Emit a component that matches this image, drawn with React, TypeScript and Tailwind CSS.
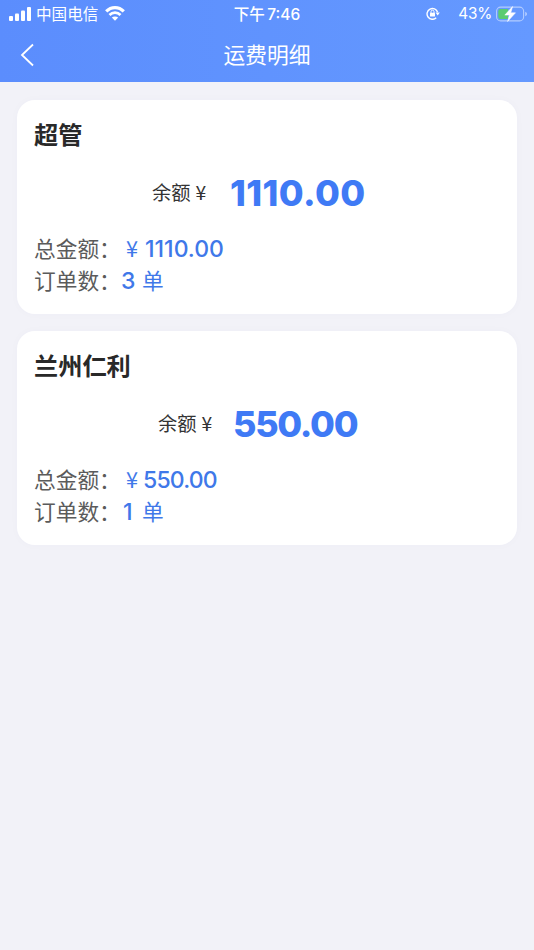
import clsx from "clsx";

type Account = {
  name: string;
  balance: string;
  total: string;
  orders: number;
  balanceClass: string;
  balanceTracking: string;
  totalTracking: string;
  orderClass: string;
};

const accounts: Account[] = [
  {
    name: "超管",
    balance: "1110.00",
    total: "1110.00",
    orders: 3,
    balanceClass: "pl-[118px]",
    balanceTracking: "tracking-[0.4px]",
    totalTracking: "ml-[2px] tracking-[0px]",
    orderClass: "w-[21px]",
  },
  {
    name: "兰州仁利",
    balance: "550.00",
    total: "550.00",
    orders: 1,
    balanceClass: "pl-[124px]",
    balanceTracking: "-ml-[3px] tracking-[-1.3px]",
    totalTracking: "tracking-[-0.8px]",
    orderClass: "w-[21px] pl-[2px]",
  },
];

function SignalIcon() {
  return (
    <svg width="22" height="14" viewBox="0 0 22 14" fill="white">
      <rect x="0" y="9" width="4" height="5" rx="1" />
      <rect x="6" y="6.5" width="4" height="7.5" rx="1" />
      <rect x="12" y="3.5" width="4" height="10.5" rx="1" />
      <rect x="18" y="0" width="4" height="14" rx="1" />
    </svg>
  );
}

function WifiIcon() {
  return (
    <svg width="20" height="15" viewBox="0 0 20 15" fill="none" stroke="white">
      <path d="M1.2 5.4C6.2.3 13.8.3 18.8 5.4" strokeWidth="3.1" />
      <path d="M4.5 8.9c3.1-3 7.9-3 11 0" strokeWidth="2.8" />
      <path d="M10 14.8 6.8 11.6c1.7-1.6 4.7-1.6 6.4 0Z" fill="white" stroke="none" />
    </svg>
  );
}

function RotationLockIcon() {
  return (
    <svg width="14" height="13" viewBox="0 0 14 13" fill="none" stroke="white">
      <path d="M10.2 10.8A5.4 5.4 0 1 1 11.6 5.3" strokeWidth="1.4" />
      <path d="M9.6 5.6h4.2l-2.1 2.9Z" fill="white" stroke="none" />
      <rect x="4" y="5.7" width="5" height="3.8" rx=".5" fill="white" stroke="none" />
      <path d="M5 6V4.7a1.5 1.5 0 0 1 3 0V6" strokeWidth="1" />
    </svg>
  );
}

function BatteryIcon() {
  return (
    <svg width="32" height="16" viewBox="0 0 32 16" fill="none">
      <rect x=".6" y="1.1" width="27" height="13.8" rx="4" stroke="white" strokeOpacity=".5" strokeWidth="1.1" />
      <path d="M4.5 3H12v10H4.5A2.2 2.2 0 0 1 2.3 10.8V5.2A2.2 2.2 0 0 1 4.5 3Z" fill="#5bcb72" />
      <path d="M29.2 5.7v4.6c1.2-.5 1.8-1.3 1.8-2.3s-.6-1.8-1.8-2.3Z" fill="white" fillOpacity=".5" />
      <path d="M16.6.5 8.8 9.1h4.6l-1.8 6.4 7.9-8.7h-4.7Z" fill="white" stroke="white" strokeWidth=".5" />
    </svg>
  );
}

function StatusBar() {
  return (
    <div className="grid h-7 grid-cols-3 items-center pr-[6px] pl-[9px] text-white">
      <div className="flex items-center pb-px">
        <SignalIcon />
        <span className="mr-[7px] ml-[5px] text-[15.6px] leading-none">中国电信</span>
        <WifiIcon />
      </div>
      <div className="pr-[3px] text-center text-[15.5px] leading-none font-medium whitespace-nowrap">
        下午 <span className="-ml-px font-['Inter']">7:46</span>
      </div>
      <div className="flex items-center justify-end pb-px">
        <RotationLockIcon />
        <span className="mr-1 ml-[18px] font-['Inter'] text-[15.3px] leading-none tracking-[-0.2px]">43%</span>
        <BatteryIcon />
      </div>
    </div>
  );
}

function AccountCard({ account }: { account: Account }) {
  return (
    <section className="h-[214px] rounded-[18px] bg-white px-[17px] pt-4 shadow-[0_0_10px_rgba(70,70,120,0.025)]">
      <h2 className="h-9 text-[24.2px] leading-9 font-bold text-[#292929]">{account.name}</h2>
      <div className={clsx("mt-4 flex h-12 items-center", account.balanceClass)}>
        <span className="w-[78px] text-[19.3px] text-[#333]">
          余额<span className="ml-[5px] inline-block">¥</span>
        </span>
        <span className={clsx("pt-[2px] font-['Inter'] text-[36px] leading-none font-extrabold text-[#3f7af5]", account.balanceTracking)}>
          {account.balance}
        </span>
      </div>
      <div className="mt-4 text-[21.7px] leading-8 text-[#5b5b5b]">
        <div className="flex h-8 items-center">
          <span className="w-[92px] shrink-0 whitespace-nowrap">总金额：</span>
          <span className="w-[17px] text-[#3f78e9]">¥</span>
          <span className={clsx("pt-[2px] font-['Inter'] text-[23px] font-medium text-[#3f78e9]", account.totalTracking)}>
            {account.total}
          </span>
        </div>
        <div className="flex h-8 items-center">
          <span className="w-[87px] shrink-0 whitespace-nowrap">订单数：</span>
          <span className={clsx("pt-[2px] font-['Inter'] text-[23px] font-medium text-[#3f78e9]", account.orderClass)}>
            {account.orders}
          </span>
          <span className="text-[#3f78e9]">单</span>
        </div>
      </div>
    </section>
  );
}

export default function App() {
  return (
    <div className="min-h-[950px] w-full bg-[#f2f2f8] font-['Noto_Sans_CJK_SC',sans-serif]">
      <header className="h-[82px] bg-linear-to-r from-[#5b8dfd] to-[#6599ff]">
        <StatusBar />
        <div className="grid h-[54px] grid-cols-[60px_1fr_60px] items-center text-white">
          <button className="pl-5" aria-label="返回">
            <svg width="14" height="24" viewBox="0 0 14 24" fill="none" stroke="white" strokeWidth="1.8">
              <path d="M13 1.5 2 12l11 10.5" />
            </svg>
          </button>
          <h1 className="pb-[3px] text-center text-[21.8px] leading-none">运费明细</h1>
        </div>
      </header>
      <main className="flex flex-col gap-[17px] px-[17px] pt-[18px]">
        {accounts.map((account) => (
          <AccountCard key={account.name} account={account} />
        ))}
      </main>
    </div>
  );
}
